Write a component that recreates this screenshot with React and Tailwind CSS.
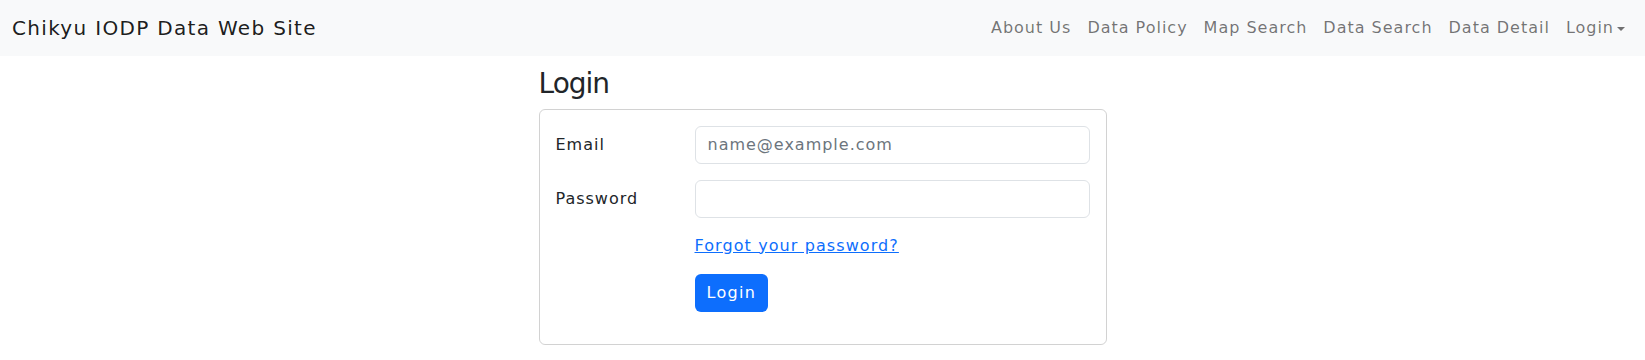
import React from "react"

const navLinks = ["About Us", "Data Policy", "Map Search", "Data Search", "Data Detail"]

export default function App() {
  return (
    <div className="min-h-[360px] bg-white font-['DejaVu_Sans',sans-serif] tracking-[0.062em] text-[#212529]">
      {/* Navbar */}
      <nav className="flex h-[56px] items-center bg-[#f8f9fa] px-3">
        <a className="py-[5px] text-[20px] leading-[30px] tracking-[0.066em] text-[rgba(0,0,0,0.9)]" href="#">
          Chikyu IODP Data Web Site
        </a>
        <ul className="ml-auto flex items-center">
          {navLinks.map((l) => (
            <li key={l}>
              <a className="block px-2 py-2 text-[16px] leading-6 text-[rgba(0,0,0,0.55)]" href="#">
                {l}
              </a>
            </li>
          ))}
          <li>
            <a className="flex items-center px-2 py-2 text-[16px] leading-6 text-[rgba(0,0,0,0.55)]" href="#">
              Login
              <span className="ml-[3px] mt-[2px] h-0 w-0 border-x-[4.8px] border-t-[4.8px] border-x-transparent border-t-[rgba(0,0,0,0.55)]" />
            </a>
          </li>
        </ul>
      </nav>

      {/* Body */}
      <div className="mx-auto w-[568px] pt-[11px]">
        <h3 className="mb-2 text-[28px] leading-[1.2] tracking-[-0.035em] text-[#212529]">Login</h3>

        <div className="rounded-[6px] border border-[rgba(0,0,0,0.175)] p-4">
          <div className="mb-4 flex">
            <label className="w-[139px] pt-[7px] text-[16px] leading-6">Email</label>
            <input
              type="email"
              placeholder="name@example.com"
              className="h-[38px] flex-1 rounded-[6px] border border-[#dee2e6] px-3 text-[16px] text-[#212529] placeholder:text-[#6c757d] outline-none"
            />
          </div>

          <div className="mb-4 flex">
            <label className="w-[139px] pt-[7px] text-[16px] leading-6">Password</label>
            <input
              type="password"
              className="h-[38px] flex-1 rounded-[6px] border border-[#dee2e6] px-3 text-[16px] outline-none"
            />
          </div>

          <div className="mb-4 flex">
            <div className="w-[139px]" />
            <a href="#" className="text-[16px] leading-6 tracking-[0.068em] text-[#0d6efd] underline">
              Forgot your password?
            </a>
          </div>

          <div className="mb-4 flex">
            <div className="w-[139px]" />
            <button className="h-[38px] rounded-[6px] bg-[#0d6efd] px-3 text-[16px] leading-6 tracking-[0.08em] text-white">
              Login
            </button>
          </div>
        </div>
      </div>
    </div>
  )
}
